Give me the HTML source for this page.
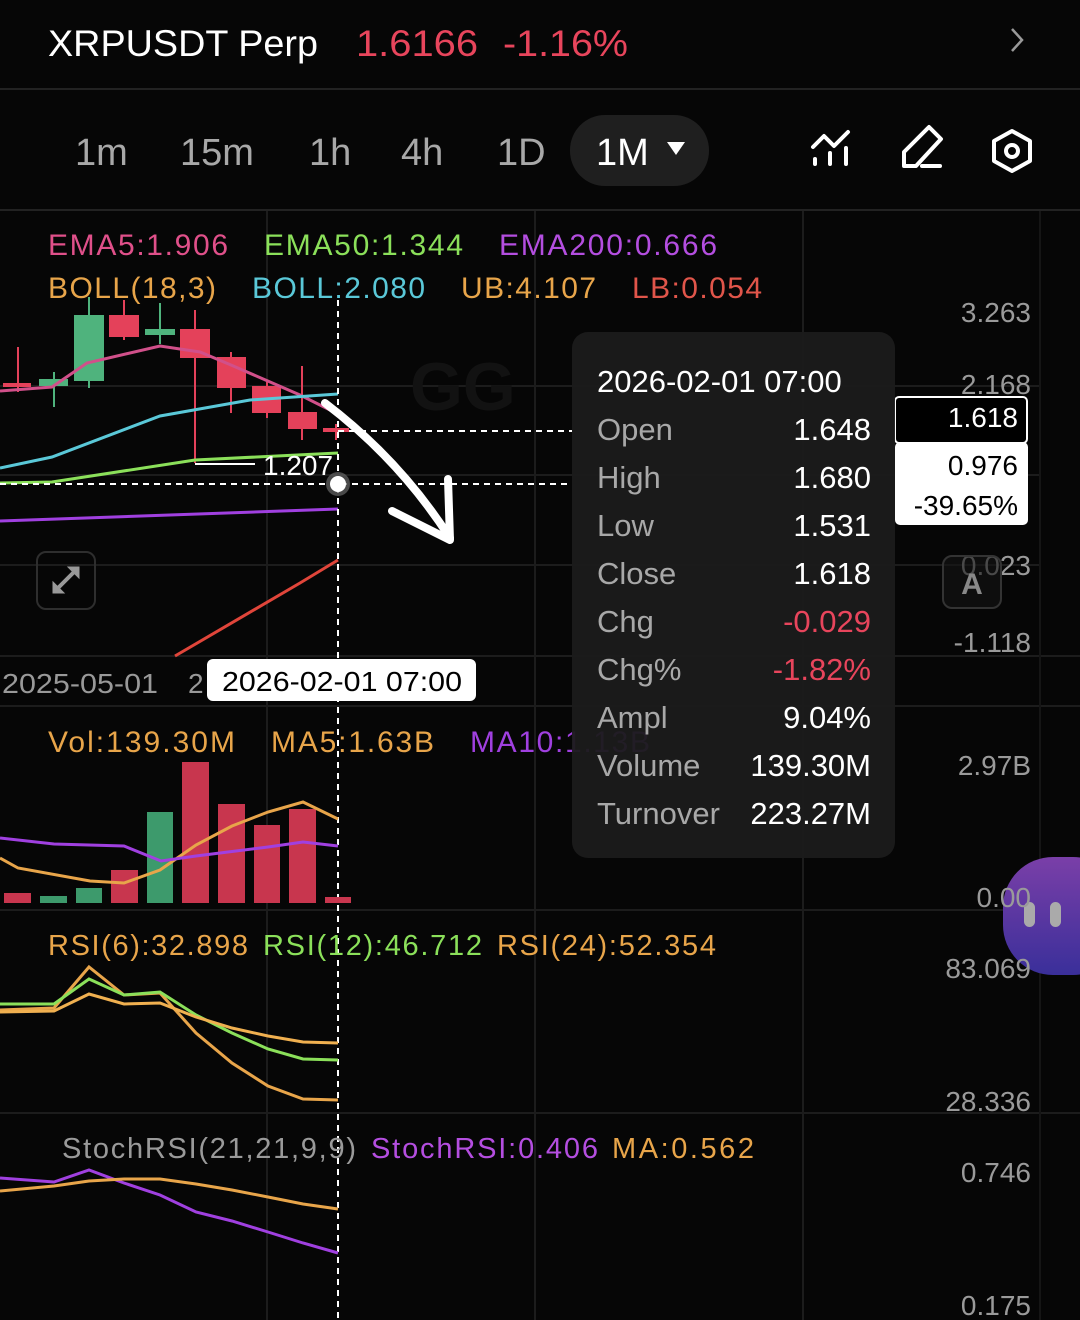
<!DOCTYPE html>
<html><head><meta charset="utf-8"><style>
html,body{margin:0;padding:0;background:#050505;width:1080px;height:1320px;overflow:hidden}
svg{display:block}
text{font-family:"Liberation Sans",sans-serif}
</style></head><body>
<svg width="1080" height="1320" viewBox="0 0 1080 1320" xmlns="http://www.w3.org/2000/svg">
<rect width="1080" height="1320" fill="#060606"/>
<!-- header -->
<text x="48" y="56" font-size="37" fill="#fff" textLength="270" lengthAdjust="spacingAndGlyphs">XRPUSDT Perp</text>
<text x="356" y="56" font-size="37" fill="#e8455c" textLength="122" lengthAdjust="spacingAndGlyphs">1.6166</text>
<text x="503" y="56" font-size="37" fill="#e8455c" textLength="125" lengthAdjust="spacingAndGlyphs">-1.16%</text>
<path d="M1012 29 L1022 40 L1012 51" stroke="#999" stroke-width="2.5" fill="none"/>
<rect x="0" y="88" width="1080" height="2" fill="#222"/>
<!-- timeframes -->
<rect x="570" y="115" width="139" height="71" rx="35" fill="#1f1f1f"/>
<g font-size="38" fill="#a8a8a8">
<text x="75" y="165">1m</text><text x="180" y="165">15m</text><text x="309" y="165">1h</text><text x="401" y="165">4h</text><text x="497" y="165">1D</text>
</g>
<text x="596" y="165" font-size="38" fill="#fff">1M</text>
<path d="M667 142 L685 142 L676 155 Z" fill="#fff"/>
<!-- icons -->
<g stroke="#fff" stroke-width="4" fill="none" stroke-linecap="round" stroke-linejoin="round">
<path d="M813 147 L824 136 L834 146 L848 132"/>
<path d="M815 159 V164 M830 153 V164 M846 148 V164"/>
<path d="M904 166 V152 L929 127 L941 139 L916 166 Z"/>
<path d="M922 166 H940"/>
<path d="M1012 131 L1030 141 V161 L1012 171 L994 161 V141 Z"/>
<circle cx="1012" cy="151" r="6"/>
</g>
<rect x="0" y="209" width="1080" height="2" fill="#222"/>
<!-- grid -->
<g stroke="#1c1c1c" stroke-width="2">
<line x1="267" y1="211" x2="267" y2="1320"/><line x1="535" y1="211" x2="535" y2="1320"/><line x1="803" y1="211" x2="803" y2="1320"/>
<line x1="0" y1="386" x2="1040" y2="386"/><line x1="0" y1="475" x2="1040" y2="475"/><line x1="0" y1="565" x2="1040" y2="565"/>
<line x1="0" y1="656" x2="1080" y2="656"/><line x1="0" y1="706" x2="1080" y2="706"/><line x1="0" y1="910" x2="1080" y2="910"/><line x1="0" y1="1113" x2="1080" y2="1113"/>
</g>
<line x1="1040" y1="211" x2="1040" y2="1320" stroke="#151515" stroke-width="2"/>
<!-- watermark -->
<text x="410" y="410" font-size="68" font-weight="bold" fill="#121212">GG</text>
<!-- legends -->
<g font-size="30" lengthAdjust="spacingAndGlyphs">
<text x="48" y="255" fill="#e0508a" textLength="180">EMA5:1.906</text>
<text x="264" y="255" fill="#8be05a" textLength="199">EMA50:1.344</text>
<text x="499" y="255" fill="#b44ee0" textLength="218">EMA200:0.666</text>
<text x="48" y="298" fill="#e8a54a" textLength="168">BOLL(18,3)</text>
<text x="252" y="298" fill="#5ac8d8" textLength="173">BOLL:2.080</text>
<text x="461" y="298" fill="#e8a54a" textLength="135">UB:4.107</text>
<text x="632" y="298" fill="#e0554a" textLength="130">LB:0.054</text>
</g>
<!-- candles -->
<g fill="#e4415a" stroke="#e4415a" stroke-width="2">
<line x1="18" y1="347" x2="18" y2="392"/><rect x="4" y="384" width="26" height="2"/>
<line x1="124" y1="300" x2="124" y2="340"/><rect x="110" y="316" width="28" height="20"/>
<line x1="195" y1="310" x2="195" y2="463"/><rect x="181" y="330" width="28" height="27"/>
<line x1="231" y1="352" x2="231" y2="413"/><rect x="218" y="358" width="27" height="29"/>
<line x1="267" y1="382" x2="267" y2="418"/><rect x="253" y="387" width="27" height="25"/>
<line x1="302" y1="366" x2="302" y2="440"/><rect x="289" y="413" width="27" height="15"/>
<line x1="336" y1="424" x2="336" y2="440"/><rect x="324" y="429" width="24" height="2"/>
</g>
<g fill="#4fb37d" stroke="#4fb37d" stroke-width="2">
<line x1="54" y1="372" x2="54" y2="407"/><rect x="40" y="380" width="27" height="5"/>
<line x1="89" y1="297" x2="89" y2="388"/><rect x="75" y="316" width="28" height="64"/>
<line x1="160" y1="303" x2="160" y2="344"/><rect x="146" y="330" width="28" height="4"/>
</g>
<g fill="none" stroke-width="3">
<polyline stroke="#d1508a" points="0,391 52,387 87,363 160,346 200,352 231,365 300,395 330,410"/>
<polyline stroke="#5ac8d8" points="0,468 52,457 160,416 250,400 338,394"/>
<polyline stroke="#8be05a" points="0,483 52,482 195,460 338,453"/>
<polyline stroke="#a040e0" points="0,521 338,509"/>
<polyline stroke="#e0453a" points="175,656 300,583 338,560"/>
</g>
<line x1="195" y1="464" x2="255" y2="464" stroke="#fff" stroke-width="2"/>
<text x="263" y="475" font-size="28" fill="#fff">1.207</text>
<!-- crosshair -->
<g stroke="#fff" stroke-width="2" stroke-dasharray="6,5">
<line x1="338" y1="300" x2="338" y2="1320"/>
<line x1="0" y1="484" x2="572" y2="484"/>
<line x1="338" y1="431" x2="572" y2="431"/>
</g>
<circle cx="338" cy="484" r="12" fill="#666" opacity="0.7"/>
<circle cx="338" cy="484" r="8" fill="#fff"/>
<!-- arrow -->
<g stroke="#fff" stroke-width="8" fill="none" stroke-linecap="round" stroke-linejoin="round">
<path d="M325 403 Q400 460 450 538"/>
<path d="M448 479 L450 540 L392 511"/>
</g>
<!-- expand -->
<rect x="37" y="552" width="58" height="57" rx="9" fill="none" stroke="#2e2e2e" stroke-width="2"/>
<g stroke="#999" stroke-width="4" fill="#999">
<line x1="56" y1="590" x2="76" y2="570"/>
<path d="M68 567 L79 567 L79 578 Z" stroke-width="1"/><path d="M53 582 L53 593 L64 593 Z" stroke-width="1"/>
</g>
<!-- date row -->
<text x="2" y="693" font-size="28" fill="#999" textLength="156" lengthAdjust="spacingAndGlyphs">2025-05-01</text>
<text x="188" y="693" font-size="28" fill="#999">2</text>
<rect x="207" y="659" width="269" height="42" rx="6" fill="#fff"/>
<text x="222" y="691" font-size="28" fill="#000" textLength="240" lengthAdjust="spacingAndGlyphs">2026-02-01 07:00</text>
<!-- volume -->
<g font-size="30" lengthAdjust="spacingAndGlyphs">
<text x="48" y="752" fill="#e8a54a" textLength="187">Vol:139.30M</text>
<text x="271" y="752" fill="#e8a54a" textLength="163">MA5:1.63B</text>
<text x="470" y="752" fill="#a040e0" textLength="180">MA10:1.13B</text>
</g>
<g fill="#c8364e">
<rect x="4" y="893" width="27" height="10"/><rect x="111" y="870" width="27" height="33"/><rect x="182" y="762" width="27" height="141"/><rect x="218" y="804" width="27" height="99"/><rect x="254" y="825" width="26" height="78"/><rect x="289" y="809" width="27" height="94"/><rect x="325" y="897" width="26" height="6"/>
</g>
<g fill="#3d9a6c">
<rect x="40" y="896" width="27" height="7"/><rect x="76" y="888" width="26" height="15"/><rect x="147" y="812" width="26" height="91"/>
</g>
<g fill="none" stroke-width="3">
<polyline stroke="#e8a54a" points="0,858 18,868 90,881 124,883 160,870 196,845 232,826 268,812 303,802 338,819"/>
<polyline stroke="#a040e0" points="0,838 54,844 124,846 161,861 196,856 268,847 303,842 338,846"/>
</g>
<!-- RSI -->
<g font-size="29" lengthAdjust="spacingAndGlyphs">
<text x="48" y="955" fill="#e8a54a" textLength="200">RSI(6):32.898</text>
<text x="263" y="955" fill="#8be05a" textLength="219">RSI(12):46.712</text>
<text x="497" y="955" fill="#e8a54a" textLength="219">RSI(24):52.354</text>
</g>
<g fill="none" stroke-width="3">
<polyline stroke="#e8a54a" points="0,1010 54,1008 89,967 124,995 160,993 196,1033 232,1063 268,1086 303,1099 338,1100"/>
<polyline stroke="#8be05a" points="0,1004 54,1004 89,979 124,995 160,992 196,1015 232,1033 268,1049 303,1059 338,1060"/>
<polyline stroke="#f0b050" points="0,1012 54,1011 89,994 124,1004 160,1003 196,1017 232,1028 268,1036 303,1042 338,1043"/>
</g>
<!-- Stoch -->
<g font-size="29" lengthAdjust="spacingAndGlyphs">
<text x="62" y="1158" fill="#9a9a9a" textLength="294">StochRSI(21,21,9,9)</text>
<text x="371" y="1158" fill="#b44ee0" textLength="227">StochRSI:0.406</text>
<text x="612" y="1158" fill="#e8a54a" textLength="142">MA:0.562</text>
</g>
<g fill="none" stroke-width="3">
<polyline stroke="#a040e0" points="0,1178 54,1182 89,1170 124,1183 160,1195 196,1212 232,1221 268,1232 303,1243 338,1253"/>
<polyline stroke="#e8a54a" points="0,1191 54,1186 89,1181 124,1179 160,1179 196,1184 232,1190 268,1197 303,1204 338,1209"/>
</g>
<!-- floating button -->
<defs><linearGradient id="pg" x1="0" y1="0" x2="0" y2="1"><stop offset="0" stop-color="#7a3fa8"/><stop offset="1" stop-color="#3a2f9a"/></linearGradient></defs>
<rect x="1003" y="857" width="120" height="118" rx="50" fill="url(#pg)"/>
<rect x="1024" y="902" width="11" height="25" rx="5.5" fill="#aaa"/>
<rect x="1050" y="902" width="11" height="25" rx="5.5" fill="#aaa"/>
<!-- right axis -->
<g font-size="28" fill="#9a9a9a" text-anchor="end">
<text x="1031" y="322">3.263</text><text x="1031" y="394">2.168</text><text x="1031" y="575">0.023</text><text x="1031" y="652">-1.118</text>
<text x="1031" y="775">2.97B</text><text x="1031" y="907">0.00</text><text x="1031" y="978">83.069</text><text x="1031" y="1111">28.336</text>
<text x="1031" y="1182">0.746</text><text x="1031" y="1315">0.175</text>
</g>
<!-- A button -->
<rect x="943" y="556" width="58" height="52" rx="9" fill="rgba(20,20,20,0.6)" stroke="#333" stroke-width="2"/>
<text x="972" y="594" font-size="30" font-weight="bold" fill="#888" text-anchor="middle">A</text>
<!-- price labels -->
<rect x="895" y="397" width="132" height="46" rx="4" fill="#000" stroke="#fff" stroke-width="2"/>
<text x="1018" y="427" font-size="28" fill="#fff" text-anchor="end">1.618</text>
<rect x="895" y="442" width="133" height="83" rx="5" fill="#fff"/>
<text x="1018" y="475" font-size="28" fill="#000" text-anchor="end">0.976</text>
<text x="1018" y="515" font-size="28" fill="#000" text-anchor="end">-39.65%</text>
<!-- tooltip -->
<rect x="572" y="332" width="323" height="526" rx="16" fill="#1b1b1b" opacity="0.95"/>
<text x="597" y="392" font-size="31" fill="#fff">2026-02-01 07:00</text>
<g font-size="31" fill="#a8a8a8">
<text x="597" y="440">Open</text><text x="597" y="488">High</text><text x="597" y="536">Low</text><text x="597" y="584">Close</text><text x="597" y="632">Chg</text><text x="597" y="680">Chg%</text><text x="597" y="728">Ampl</text><text x="597" y="776">Volume</text><text x="597" y="824">Turnover</text>
</g>
<g font-size="31" fill="#fff" text-anchor="end">
<text x="871" y="440">1.648</text><text x="871" y="488">1.680</text><text x="871" y="536">1.531</text><text x="871" y="584">1.618</text>
<text x="871" y="632" fill="#e8455c">-0.029</text><text x="871" y="680" fill="#e8455c">-1.82%</text>
<text x="871" y="728">9.04%</text><text x="871" y="776">139.30M</text><text x="871" y="824">223.27M</text>
</g>
</svg>
</body></html>
